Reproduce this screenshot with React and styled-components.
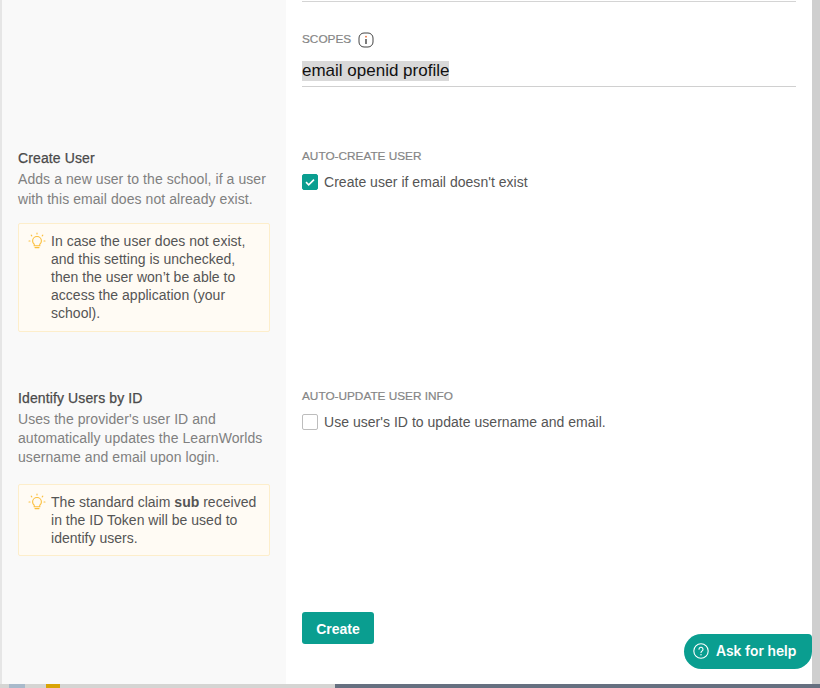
import React from "react";
import styled, { createGlobalStyle } from "styled-components";

const Global = createGlobalStyle`
  html, body { margin: 0; padding: 0; background: #667080; }
  body { font-family: "Liberation Sans", Arial, sans-serif; }
  * { box-sizing: border-box; }
`;

const Screen = styled.div`
  position: relative;
  width: 820px;
  height: 688px;
  overflow: hidden;
  display: flex;
  flex-direction: column;
`;

const Window = styled.div`
  display: flex;
  height: 684px;
  flex: none;
  background: #fff;
`;

const LeftEdge = styled.div`
  width: 2px;
  background: #e6e6e6;
`;

const Form = styled.div`
  flex: 1;
  display: grid;
  grid-template-columns: 284px 1fr;
  grid-template-rows: 148px 240px 1fr;
`;

const Side = styled.div`
  background: #f9f9f9;
  padding: 0 16px;
`;

const Main = styled.div`
  padding: 0 16px;
  display: flex;
  flex-direction: column;
`;

const SideTitle = styled.div`
  font-size: 14px;
  line-height: 20px;
  letter-spacing: 0.12px;
  color: #4a4a4a;
  -webkit-text-stroke: 0.25px #4a4a4a;
  margin-bottom: ${(p) => p.$gap || "0"};
`;

const SideText = styled.div`
  font-size: 14px;
  letter-spacing: 0.07px;
  line-height: ${(p) => p.$lh || "20px"};
  color: #808080;
`;

const Note = styled.div`
  display: flex;
  gap: 5px;
  width: 252px;
  margin-top: ${(p) => p.$top};
  padding: 8px 6px 0 9px;
  height: ${(p) => p.$height};
  background: #fffbf4;
  border: 1px solid #fdeecb;
  border-radius: 2px;
  font-size: 14px;
  letter-spacing: 0.02px;
  line-height: 18px;
  color: #555;
  white-space: nowrap;
  b { font-weight: 700; }
`;

const Bulb = styled.svg`
  flex: none;
  width: 18px;
  height: 18px;
`;

const RuleTop = styled.div`
  height: 2px;
  border-bottom: 1px solid #d4d4d4;
  width: 494px;
`;

const Label = styled.div`
  display: flex;
  align-items: center;
  gap: 7px;
  font-size: 11.8px;
  line-height: 14px;
  color: #858585;
  -webkit-text-stroke: 0.2px #858585;
  margin-top: ${(p) => p.$top};
`;

const InfoIcon = styled.svg`
  width: 16px;
  height: 16px;
  margin-top: 3px;
`;

const ScopeField = styled.div`
  width: 494px;
  margin-top: 13px;
  height: 26px;
  border-bottom: 1px solid #d0d0d0;
  font-size: 17px;
  line-height: 20px;
  color: #111;
`;

const Selected = styled.span`
  display: inline-block;
  background: #d9d9d9;
  height: 20px;
`;

const CheckRow = styled.div`
  display: flex;
  align-items: center;
  gap: 6px;
  margin-top: 11px;
  font-size: 14px;
  letter-spacing: 0.03px;
  line-height: 16px;
  color: #555;
`;

const Box = styled.span`
  width: 16px;
  height: 16px;
  border-radius: 2px;
  display: flex;
  align-items: center;
  justify-content: center;
  background: ${(p) => (p.$on ? "#0a9e90" : "#fff")};
  border: 1px solid ${(p) => (p.$on ? "#0a9e90" : "#bdbdbd")};
`;

const CreateButton = styled.button`
  margin-top: 182px;
  width: 72px;
  height: 32px;
  padding: 2px 0 0;
  border: 0;
  border-radius: 3px;
  background: #0a9e90;
  color: #fff;
  font-family: "Liberation Sans", Arial, sans-serif;
  font-size: 14px;
  font-weight: 700;
`;

const Scrollbar = styled.div`
  width: 8px;
  background: #cfcfcf;
`;

const BottomStrip = styled.div`
  height: 4px;
  flex: none;
  display: flex;
`;

const StripLeft = styled.div`
  width: 335px;
  background: #d5d5d3;
  display: flex;
`;

const StripPiece = styled.div`
  width: ${(p) => p.$w}px;
  margin-left: ${(p) => p.$ml}px;
  background: ${(p) => p.$c};
`;

const StripRight = styled.div`
  flex: 1;
  background: #667080;
`;

const HelpPill = styled.div`
  position: absolute;
  left: 684px;
  top: 634px;
  width: 128px;
  height: 35px;
  border-radius: 18px 4px 18px 18px;
  background: #0a9e90;
  color: #fff;
  display: flex;
  align-items: center;
  gap: 7px;
  padding: 0 0 2px 9px;
  font-family: Inter, sans-serif;
  font-size: 13.85px;
  font-weight: 600;
`;

const BulbIcon = () => (
  <Bulb viewBox="0 0 18 18" fill="none" stroke="#fbbf3c" strokeWidth="1.1" strokeLinecap="round">
    <path d="M6.2 12.2C5 11.2 4.6 10 4.6 8.9a4.4 4.4 0 0 1 8.8 0c0 1.1-.4 2.3-1.6 3.3v1.6H6.2z" />
    <path d="M7 15.6h4" />
    <path d="M9 1v1M3.2 3.2l.6.6M14.8 3.2l-.6.6M1 9h1M16 9h1" />
  </Bulb>
);

export default function App() {
  return (
    <Screen>
      <Global />
      <Window>
        <LeftEdge />
        <Form>
          <Side />
          <Main>
            <RuleTop />
            <Label $top="27px">
              SCOPES
              <InfoIcon viewBox="0 0 16 16" fill="none">
                <rect x="1" y="1" width="14" height="14" rx="5" stroke="#444" strokeWidth="1" />
                <path d="M8 7v5" stroke="#444" strokeWidth="1.4" />
                <circle cx="8" cy="4.7" r="0.9" fill="#e8703a" />
              </InfoIcon>
            </Label>
            <ScopeField>
              <Selected>email openid profile</Selected>
            </ScopeField>
          </Main>

          <Side>
            <SideTitle $gap="1px">Create User</SideTitle>
            <SideText>
              Adds a new user to the school, if a user
              <br />
              with this email does not already exist.
            </SideText>
            <Note $top="14px" $height="109px">
              <BulbIcon />
              <div>
                In case the user does not exist,
                <br />
                and this setting is unchecked,
                <br />
                then the user won’t be able to
                <br />
                access the application (your
                <br />
                school).
              </div>
            </Note>
          </Side>
          <Main>
            <Label $top="1px">AUTO-CREATE USER</Label>
            <CheckRow>
              <Box $on>
                <svg width="12" height="12" viewBox="0 0 12 12" fill="none">
                  <path d="M2 6.2l2.7 2.6L10 3.6" stroke="#fff" strokeWidth="1.6" />
                </svg>
              </Box>
              Create user if email doesn't exist
            </CheckRow>
          </Main>

          <Side>
            <SideTitle $gap="2px">Identify Users by ID</SideTitle>
            <SideText $lh="19px">
              Uses the provider's user ID and
              <br />
              automatically updates the LearnWorlds
              <br />
              username and email upon login.
            </SideText>
            <Note $top="17px" $height="72px">
              <BulbIcon />
              <div>
                The standard claim <b>sub</b> received
                <br />
                in the ID Token will be used to
                <br />
                identify users.
              </div>
            </Note>
          </Side>
          <Main>
            <Label $top="1px">AUTO-UPDATE USER INFO</Label>
            <CheckRow>
              <Box />
              Use user's ID to update username and email.
            </CheckRow>
            <CreateButton>Create</CreateButton>
          </Main>
        </Form>
        <Scrollbar />
      </Window>
      <BottomStrip>
        <StripLeft>
          <StripPiece $w={16} $ml={9} $c="#a9bacb" />
          <StripPiece $w={14} $ml={21} $c="#d9a406" />
        </StripLeft>
        <StripRight />
      </BottomStrip>
      <HelpPill>
        <svg width="16" height="16" viewBox="0 0 16 16" fill="none" stroke="#fff" strokeWidth="1.1" strokeLinecap="round">
          <circle cx="8" cy="8" r="7.2" />
          <path d="M6 6.2a2 2 0 1 1 3.1 1.7c-.7.4-1.1.8-1.1 1.6" />
          <path d="M8 11.6v.2" strokeWidth="1.4" />
        </svg>
        Ask for help
      </HelpPill>
    </Screen>
  );
}
